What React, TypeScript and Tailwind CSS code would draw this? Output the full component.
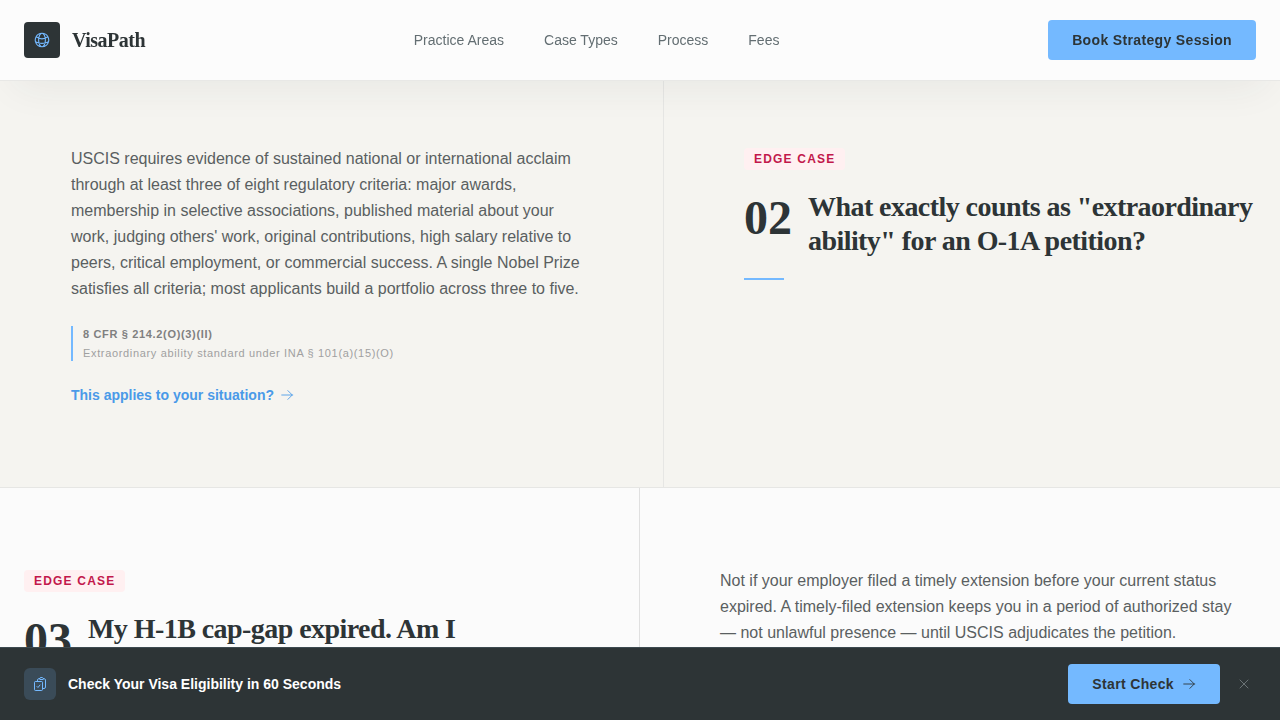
import type { ReactNode } from 'react'
import {
  HiOutlineArrowRight,
  HiOutlineClipboardDocumentCheck,
  HiOutlineGlobeAlt,
  HiOutlineXMark,
} from 'react-icons/hi2'

const navLinks = [
  { href: '#practice-areas', label: 'Practice Areas' },
  { href: '#case-types', label: 'Case Types' },
  { href: '#process', label: 'Process' },
  { href: '#fees', label: 'Fees' },
]

function Header() {
  return (
    <header className="fixed inset-x-0 top-0 z-40 border-b border-[#e8e8e6] bg-[#fcfcfc] shadow-[0_20px_40px_-15px_rgba(45,52,54,0.07)]">
      <div className="flex h-20 items-center justify-between px-6">
        <a href="#top" className="flex items-center gap-3">
          <span className="flex size-9 items-center justify-center rounded-sm bg-[#2d3436]">
            <HiOutlineGlobeAlt strokeWidth={1.5} className="size-[18px] text-[#74b9ff]" />
          </span>
          <span className="font-['Liberation_Serif',serif] text-xl font-bold tracking-tight">VisaPath</span>
        </a>
        <nav className="flex gap-10">
          {navLinks.map((link) => (
            <a key={link.href} href={link.href} className="text-sm text-[#636e72]">
              {link.label}
            </a>
          ))}
        </nav>
        <button className="h-10 rounded-sm bg-[#74b9ff] px-6 text-sm font-bold tracking-wide">
          Book Strategy Session
        </button>
      </div>
    </header>
  )
}

function Question({ number, children }: { number: string; children: ReactNode }) {
  return (
    <div className="w-full max-w-lg">
      <span className="inline-block rounded-sm bg-[#fff0f1] px-2.5 py-[3px] text-xs font-bold tracking-widest text-[#c2184b] uppercase">
        Edge Case
      </span>
      <div className="mt-5 flex items-start gap-4">
        <span className="pt-1 font-['Liberation_Serif',serif] text-5xl leading-none font-bold">{number}</span>
        <h2 className="font-['Liberation_Serif',serif] text-[28px] leading-[34px] font-bold tracking-[-0.02em]">
          {children}
        </h2>
      </div>
      <div className="mt-5 h-0.5 w-10 bg-[#74b9ff]" />
    </div>
  )
}

function Answer({ children }: { children: ReactNode }) {
  return <p className="text-base leading-[26px] text-[#5a5f61]">{children}</p>
}

function EligibilityBar() {
  return (
    <div className="fixed inset-x-0 bottom-0 z-40 border-t border-[#3d4a50] bg-[#2d3436]">
      <div className="flex h-18 items-center justify-between px-6">
        <div className="flex items-center gap-3">
          <span className="flex size-8 items-center justify-center rounded-md bg-[#3a4b58]">
            <HiOutlineClipboardDocumentCheck strokeWidth={1.5} className="size-4 text-[#74b9ff]" />
          </span>
          <span className="text-sm font-bold text-white">Check Your Visa Eligibility in 60 Seconds</span>
        </div>
        <div className="flex items-center gap-3">
          <button className="flex h-10 items-center gap-2 rounded-sm bg-[#74b9ff] px-6 text-sm font-bold tracking-wide">
            Start Check
            <HiOutlineArrowRight strokeWidth={1.5} className="size-3.5" />
          </button>
          <button aria-label="Dismiss" className="flex size-6 items-center justify-center text-[#8b9497]">
            <HiOutlineXMark strokeWidth={1} className="size-4" />
          </button>
        </div>
      </div>
    </div>
  )
}

export default function App() {
  return (
    <div id="top" className="h-screen overflow-hidden bg-[#fbfbfb] font-['Liberation_Sans',Arial,sans-serif] text-[#2d3436]">
      <Header />

      <main className="pt-[66px]">
        <section className="flex border-b border-[#e6e6e4] bg-[#f5f4f0]">
          <div className="flex flex-1 justify-end border-r border-[#e6e6e4] py-20 pr-20">
            <div className="max-w-lg">
              <Answer>
                USCIS requires evidence of sustained national or international acclaim through at least three of
                eight regulatory criteria: major awards, membership in selective associations, published material
                about your work, judging others' work, original contributions, high salary relative to peers,
                critical employment, or commercial success. A single Nobel Prize satisfies all criteria; most
                applicants build a portfolio across three to five.
              </Answer>
              <div className="mt-6 flex flex-col gap-[3px] border-l-2 border-[#74b9ff] pl-2.5 text-[11px] leading-4">
                <strong className="tracking-[0.06em] text-[#808080] uppercase">8 CFR § 214.2(o)(3)(ii)</strong>
                <span className="tracking-[0.06em] text-[#a0a0a0]">
                  Extraordinary ability standard under INA § 101(a)(15)(O)
                </span>
              </div>
              <a href="#apply" className="mt-6 mb-0.5 flex h-5 items-center gap-1.5 text-sm font-bold text-[#4a9ae8]">
                This applies to your situation?
                <HiOutlineArrowRight strokeWidth={1.5} className="size-3.5" />
              </a>
            </div>
          </div>
          <div className="w-[616px] py-20 pr-6 pl-20">
            <Question number="02">What exactly counts as "extraordinary ability" for an O-1A petition?</Question>
          </div>
        </section>

        <section className="grid grid-cols-2">
          <div className="border-r border-[#e0e0e0] py-20 pr-20 pl-6">
            <Question number="03">My H-1B cap-gap expired. Am I accruing unlawful presence?</Question>
          </div>
          <div className="py-20 pr-6 pl-20">
            <div className="max-w-lg">
              <Answer>
                Not if your employer filed a timely extension before your current status expired. A timely-filed
                extension keeps you in a period of authorized stay — not unlawful presence — until USCIS
                adjudicates the petition.
              </Answer>
            </div>
          </div>
        </section>
      </main>

      <EligibilityBar />
    </div>
  )
}
